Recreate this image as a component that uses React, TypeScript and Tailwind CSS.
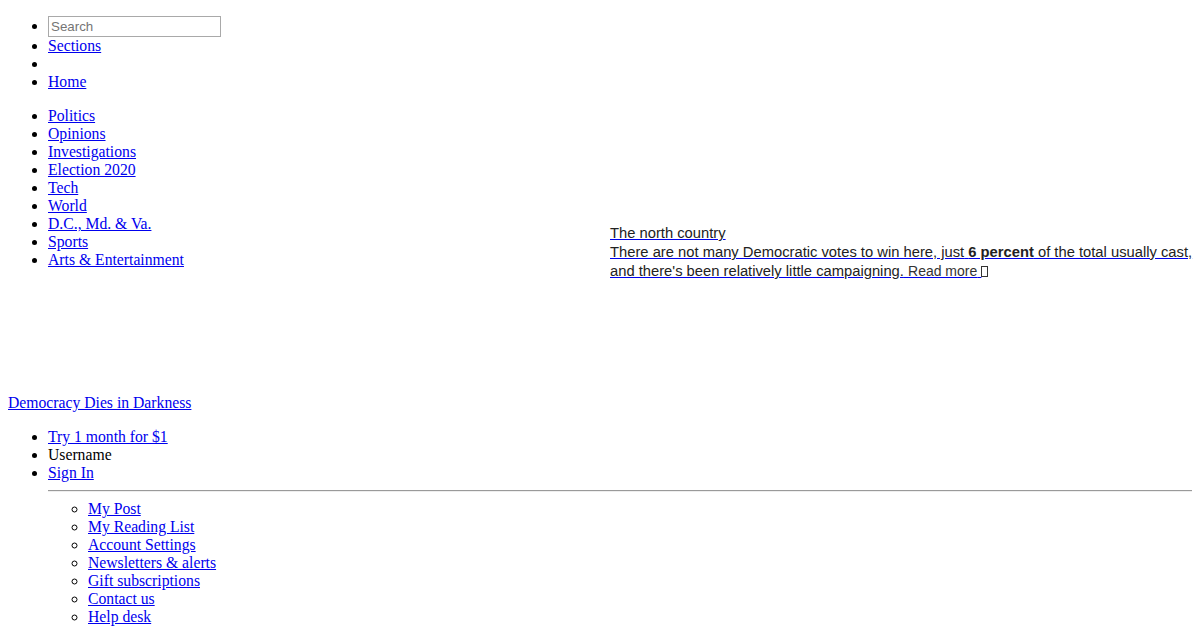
import React from "react";

const sections = [
  "Politics",
  "Opinions",
  "Investigations",
  "Election 2020",
  "Tech",
  "World",
  "D.C., Md. & Va.",
  "Sports",
  "Arts & Entertainment",
];

const accountLinks = [
  "My Post",
  "My Reading List",
  "Account Settings",
  "Newsletters & alerts",
  "Gift subscriptions",
  "Contact us",
  "Help desk",
];

const link = "text-[#0000ee] underline";

export default function App() {
  return (
    <div className="min-h-[630px] bg-white px-2 font-['Liberation_Serif',serif] text-[15.7px] leading-[18px] text-black">
      {/* top: nav lists + teaser */}
      <div className="flex">
        <div className="w-[602px] shrink-0">
          <ul className="mt-4 mb-4 list-disc pl-10">
            <li className="h-[21px]">
              <input
                type="text"
                placeholder="Search"
                className="h-[21px] w-[173px] border border-[#a9a9a9] px-[2px] font-['Liberation_Sans',sans-serif] text-[13.33px] placeholder:text-[#757575]"
              />
            </li>
            <li>
              <a href="#" className={link}>
                Sections
              </a>
            </li>
            <li className="h-[18px]"></li>
            <li>
              <a href="#" className={link}>
                Home
              </a>
            </li>
          </ul>

          <ul className="mt-4 mb-4 list-disc pl-10">
            {sections.map((s) => (
              <li key={s}>
                <a href="#" className={link}>
                  {s}
                </a>
              </li>
            ))}
          </ul>
        </div>

        {/* teaser */}
        <div className="-mr-2 flex-1 pt-[224px] font-['Liberation_Sans',sans-serif] text-[14.75px] leading-[19px] text-[#222]">
          <a href="#" className="block underline decoration-[#0000ee]">
            The north country
          </a>
          <a href="#" className="underline decoration-[#0000ee]">
            There are not many Democratic votes to win here, just{" "}
            <b>6 percent</b> of the total usually cast, and there's been
            relatively little campaigning.{" "}
            <span className="text-[14px] text-[#333]">Read more</span>{" "}
            <span className="inline-block h-[11px] w-[7px] border border-[#333] align-[-1px]"></span>
          </a>
        </div>
      </div>

      <div className="h-[109px]" />

      <a href="#" className={link}>
        Democracy Dies in Darkness
      </a>

      <ul className="mt-4 list-disc pl-10">
        <li>
          <a href="#" className={link}>
            Try 1 month for $1
          </a>
        </li>
        <li>Username</li>
        <li>
          <a href="#" className={link}>
            Sign In
          </a>
        </li>
        <li className="list-none">
          <hr className="my-2 h-[2px] border-0 border-t border-b border-t-[#9a9a9a] border-b-[#eeeeee]" />
          <ul className="list-[circle] pl-10">
            {accountLinks.map((s) => (
              <li key={s}>
                <a href="#" className={link}>
                  {s}
                </a>
              </li>
            ))}
          </ul>
        </li>
      </ul>
    </div>
  );
}
